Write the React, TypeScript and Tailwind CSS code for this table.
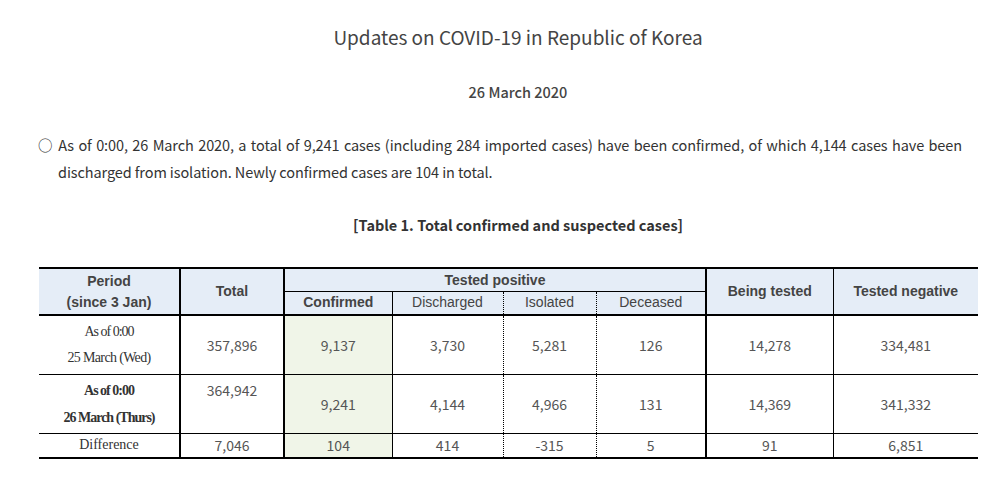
import React from "react";

const sans = "font-['Noto_Sans_CJK_KR','Noto_Sans',sans-serif]";
const arial = "font-['Liberation_Sans',Arial,sans-serif]";
const serif = "font-['Liberation_Serif','Times_New_Roman',serif]";

export default function App() {
  const th = `${arial} bg-[#e5edf7] text-[#444] text-[14px] font-bold text-center p-0`;
  const thSub = `${arial} bg-[#e5edf7] text-[#444] text-[14px] text-center p-0 border-t border-t-black`;
  const td = `${sans} text-[#555] text-[14px] text-center p-0 leading-[20px]`;
  const green = "bg-[#f0f5e8]";
  const dotR = "border-r border-r-black [border-right-style:dotted]";
  return (
    <div className="w-[1003px] h-[479px] bg-white overflow-hidden">
      <div className="w-[960px] ml-[38px]">
        <h1 className={`${sans} mt-[23px] h-[28px] leading-[28px] text-[19px] text-[#444] text-center font-normal`}>
          Updates on COVID-19 in Republic of Korea
        </h1>
        <p className={`${sans} mt-[29px] leading-[24px] text-[14.5px] font-medium text-[#444] text-center`}>
          26 March 2020
        </p>
        <div className={`${sans} mt-[27px] w-[924px] text-[14.5px] tracking-[-0.1px] leading-[27px] text-[#333]`}>
          <p className="text-justify [text-align-last:justify]">
            ○ As of 0:00, 26 March 2020, a total of 9,241 cases (including 284 imported cases) have been confirmed, of which 4,144 cases have been
          </p>
          <p className="pl-[20px]">
            discharged from isolation. Newly confirmed cases are 104 in total.
          </p>
        </div>
        <p className={`${sans} mt-[28px] leading-[24px] text-[14.5px] font-bold text-[#333] text-center`}>
          [Table 1. Total confirmed and suspected cases]
        </p>
      </div>
      <table className="mt-[30px] ml-[39px] w-[939px] border-collapse table-fixed border-t-2 border-b-2 border-black">
        <colgroup>
          <col className="w-[141px]" />
          <col className="w-[104px]" />
          <col className="w-[108px]" />
          <col className="w-[111px]" />
          <col className="w-[93px]" />
          <col className="w-[110px]" />
          <col className="w-[127px]" />
          <col className="w-[145px]" />
        </colgroup>
        <thead>
          <tr className="h-[23px]">
            <th rowSpan={2} className={`${th} leading-[21px] border-r-2 border-black border-b-2`}>
              Period
              <br />
              (since 3 Jan)
            </th>
            <th rowSpan={2} className={`${th} border-r-2 border-black border-b-2`}>Total</th>
            <th colSpan={4} className={`${th} leading-[20px] border-r-2 border-black`}>Tested positive</th>
            <th rowSpan={2} className={`${th} border-r border-black border-b-2`}>Being tested</th>
            <th rowSpan={2} className={`${th} border-b-2 border-black`}>Tested negative</th>
          </tr>
          <tr className="h-[24px]">
            <th className={`${thSub} font-bold border-r border-r-black border-b-2 border-b-black`}>Confirmed</th>
            <th className={`${thSub} font-normal ${dotR} border-b-2 border-b-black`}>Discharged</th>
            <th className={`${thSub} font-normal ${dotR} border-b-2 border-b-black`}>Isolated</th>
            <th className={`${thSub} font-normal border-r-2 border-r-black border-b-2 border-b-black`}>Deceased</th>
          </tr>
        </thead>
        <tbody>
          <tr className="h-[59px] border-b border-black">
            <td className={`${serif} text-[14px] text-[#333] text-center leading-[26px] border-r-2 border-black p-0`}>
              <span className="tracking-[-1px]">As of 0:00</span>
              <br />
              <span className="tracking-[-0.65px]">25 March (Wed)</span>
            </td>
            <td className={`${td} border-r-2 border-black`}>357,896</td>
            <td className={`${td} ${green} border-r border-black`}>9,137</td>
            <td className={`${td} ${dotR}`}>3,730</td>
            <td className={`${td} ${dotR}`}>5,281</td>
            <td className={`${td} border-r-2 border-black`}>126</td>
            <td className={`${td} border-r border-black`}>14,278</td>
            <td className={td}>334,481</td>
          </tr>
          <tr className="h-[59px] border-b border-black">
            <td className={`${serif} text-[14px] font-bold text-[#333] text-center leading-[27px] tracking-[-1px] border-r-2 border-black p-0`}>
              As of 0:00
              <br />
              26 March (Thurs)
            </td>
            <td className={`${td} align-top pt-[5px] border-r-2 border-black`}>364,942</td>
            <td className={`${td} ${green} border-r border-black`}>9,241</td>
            <td className={`${td} ${dotR}`}>4,144</td>
            <td className={`${td} ${dotR}`}>4,966</td>
            <td className={`${td} border-r-2 border-black`}>131</td>
            <td className={`${td} border-r border-black`}>14,369</td>
            <td className={td}>341,332</td>
          </tr>
          <tr className="h-[25px]">
            <td className={`${serif} text-[14px] text-[#333] text-center leading-[20px] border-r-2 border-black p-0`}>
              Difference
            </td>
            <td className={`${td} border-r-2 border-black`}>7,046</td>
            <td className={`${td} ${green} border-r border-black`}>104</td>
            <td className={`${td} ${dotR}`}>414</td>
            <td className={`${td} ${dotR}`}>-315</td>
            <td className={`${td} border-r-2 border-black`}>5</td>
            <td className={`${td} border-r border-black`}>91</td>
            <td className={td}>6,851</td>
          </tr>
        </tbody>
      </table>
    </div>
  );
}
